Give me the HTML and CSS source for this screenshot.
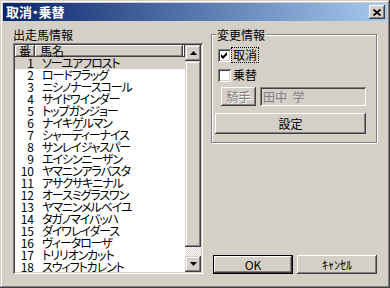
FILE: index.html
```html
<!DOCTYPE html>
<html lang="ja">
<head>
  <meta charset="UTF-8" />
  <title>取消・乗替</title>
  <link rel="stylesheet" href="styles.css">
</head>
<body>
  <div class="window">
    <div class="titlebar">
      <span class="title">取消・乗替</span>
      <span class="close-btn">
        <svg width="8" height="7" viewBox="0 0 8 7"><path d="M0.5 0.5 L7.5 6.5 M7.5 0.5 L0.5 6.5" stroke="#000" stroke-width="1.8" fill="none"/></svg>
      </span>
    </div>
    <div class="client">
      <div class="left">
        <div class="label">出走馬情報</div>
        <div class="listview">
          <div class="list-main">
            <div class="list-header">
              <div class="hcol col-no">番</div>
              <div class="hcol col-name">馬名</div>
              <div class="hcol col-rest"></div>
            </div>
            <div class="list-rows">
              <div class="row selected"><span class="no">1</span><span class="name">ソーユアフロスト</span></div>
              <div class="row"><span class="no">2</span><span class="name">ロードフラッグ</span></div>
              <div class="row"><span class="no">3</span><span class="name">ニシノナースコール</span></div>
              <div class="row"><span class="no">4</span><span class="name">サイドワインダー</span></div>
              <div class="row"><span class="no">5</span><span class="name">トップガンジョー</span></div>
              <div class="row"><span class="no">6</span><span class="name">ナイキゲルマン</span></div>
              <div class="row"><span class="no">7</span><span class="name">シャーディーナイス</span></div>
              <div class="row"><span class="no">8</span><span class="name">サンレイジャスパー</span></div>
              <div class="row"><span class="no">9</span><span class="name">エイシンニーザン</span></div>
              <div class="row"><span class="no">10</span><span class="name">ヤマニンアラバスタ</span></div>
              <div class="row"><span class="no">11</span><span class="name">アサクサキニナル</span></div>
              <div class="row"><span class="no">12</span><span class="name">オースミグラスワン</span></div>
              <div class="row"><span class="no">13</span><span class="name">ヤマニンメルベイユ</span></div>
              <div class="row"><span class="no">14</span><span class="name">タガノマイバッハ</span></div>
              <div class="row"><span class="no">15</span><span class="name">ダイワレイダース</span></div>
              <div class="row"><span class="no">16</span><span class="name">ヴィータローザ</span></div>
              <div class="row"><span class="no">17</span><span class="name">トリリオンカット</span></div>
              <div class="row"><span class="no">18</span><span class="name">スウィフトカレント</span></div>
            </div>
          </div>
          <div class="scrollbar">
            <div class="sb-btn">
              <svg width="7" height="4" viewBox="0 0 7 4"><path d="M3.5 0 L7 4 L0 4 Z" fill="#000"/></svg>
            </div>
            <div class="sb-thumb"></div>
            <div class="sb-track"></div>
            <div class="sb-btn">
              <svg width="7" height="4" viewBox="0 0 7 4"><path d="M0 0 L7 0 L3.5 4 Z" fill="#000"/></svg>
            </div>
          </div>
        </div>
      </div>

      <div class="right">
        <div class="group">
          <div class="group-title">変更情報</div>
          <div class="check-row">
            <span class="checkbox">
              <svg width="7" height="7" viewBox="0 0 7 7"><path d="M0 2 L2 4 L6 0 L6 3 L2 7 L0 5 Z" fill="#000"/></svg>
            </span>
            <span class="check-label focused">取消</span>
          </div>
          <div class="check-row">
            <span class="checkbox"></span>
            <span class="check-label">乗替</span>
          </div>
          <div class="jockey-row">
            <span class="btn disabled jockey-btn">騎手</span>
            <span class="textbox">田中&nbsp;&nbsp;学</span>
          </div>
          <span class="btn set-btn">設定</span>
        </div>
        <div class="buttons">
          <span class="btn default">OK</span>
          <span class="btn">ｷｬﾝｾﾙ</span>
        </div>
      </div>
    </div>
  </div>
</body>
</html>
```

FILE: styles.css
```css
body {
  margin: 0;
  font-family: "Noto Sans CJK JP", sans-serif;
  font-size: 12px;
  font-feature-settings: "palt";
  color: #000;
  background: #d4d0c8;
}
.window {
  width: 390px;
  height: 288px;
  box-sizing: border-box;
  padding: 3px;
  background: #d4d0c8;
  box-shadow: inset -1px -1px #404040, inset 1px 1px #d4d0c8, inset -2px -2px #808080, inset 2px 2px #fff;
  display: flex;
  flex-direction: column;
}
.titlebar {
  height: 18px;
  flex: none;
  display: flex;
  align-items: center;
  justify-content: space-between;
  padding: 0 2px 0 3px;
  background: linear-gradient(to right, #0a246a, #a6caf0);
  color: #fff;
  font-weight: bold;
  font-size: 13px;
  line-height: 18px;
}
.close-btn {
  width: 16px;
  height: 14px;
  box-sizing: border-box;
  background: #d4d0c8;
  display: flex;
  align-items: center;
  justify-content: center;
  box-shadow: inset -1px -1px #404040, inset 1px 1px #fff, inset -2px -2px #808080;
}
.client {
  flex: 1;
  display: flex;
  gap: 8px;
  padding: 7px 9px 11px 10px;
}
.left {
  width: 190px;
  display: flex;
  flex-direction: column;
}
.label {
  line-height: 14px;
  margin-bottom: 1px;
}
.listview {
  height: 231px;
  box-sizing: border-box;
  padding: 2px;
  background: #fff;
  box-shadow: inset 1px 1px #808080, inset -1px -1px #fff, inset 2px 2px #404040, inset -2px -2px #d4d0c8;
  display: flex;
  overflow: hidden;
}
.list-main {
  flex: 1;
  overflow: hidden;
}
.list-header {
  display: flex;
  height: 12px;
  line-height: 12px;
}
.hcol {
  box-sizing: border-box;
  background: #d4d0c8;
  box-shadow: inset -1px -1px #404040, inset 1px 1px #fff, inset -2px -2px #808080;
}
.hcol.col-no {
  width: 20px;
  text-align: center;
}
.hcol.col-name {
  width: 148px;
  padding-left: 5px;
}
.hcol.col-rest {
  flex: 1;
}
.row {
  display: flex;
  height: 12px;
  line-height: 12px;
}
.row.selected {
  background: #d4d0c8;
}
.row .no {
  width: 19px;
  text-align: right;
}
.row .name {
  padding-left: 8px;
  letter-spacing: -1.1px;
  white-space: nowrap;
}
.scrollbar {
  width: 16px;
  display: flex;
  flex-direction: column;
}
.sb-btn {
  height: 16px;
  box-sizing: border-box;
  background: #d4d0c8;
  display: flex;
  align-items: center;
  justify-content: center;
  box-shadow: inset -1px -1px #404040, inset 1px 1px #d4d0c8, inset -2px -2px #808080, inset 2px 2px #fff;
}
.sb-thumb {
  height: 186px;
  background: #d4d0c8;
  box-shadow: inset -1px -1px #404040, inset 1px 1px #d4d0c8, inset -2px -2px #808080, inset 2px 2px #fff;
}
.sb-track {
  flex: 1;
  background: repeating-conic-gradient(#fff 0 25%, #d4d0c8 0 50%) 0 0 / 2px 2px;
}
.right {
  flex: 1;
  display: flex;
  flex-direction: column;
}
.group {
  margin: 6px 1px 0 0;
  padding: 0 10px 8px 3px;
  border: 1px solid #808080;
  box-shadow: inset 1px 1px #fff, 1px 1px #fff;
  display: flex;
  flex-direction: column;
  align-items: flex-start;
}
.group-title {
  margin: -7px 0 0 1px;
  padding: 0 1px;
  line-height: 14px;
  background: #d4d0c8;
}
.check-row {
  display: flex;
  align-items: center;
  height: 16px;
  margin: 5px 0 0 3px;
}
.check-row + .check-row {
  margin-top: 4px;
}
.checkbox {
  width: 13px;
  height: 13px;
  box-sizing: border-box;
  background: #fff;
  display: flex;
  align-items: center;
  justify-content: center;
  box-shadow: inset 1px 1px #808080, inset -1px -1px #fff, inset 2px 2px #404040, inset -2px -2px #d4d0c8;
}
.check-label {
  margin-left: 1px;
  padding: 0 1px;
  line-height: 14px;
}
.check-label.focused {
  outline: 1px dotted #000;
}
.btn {
  box-sizing: border-box;
  display: flex;
  align-items: center;
  justify-content: center;
  background: #d4d0c8;
  box-shadow: inset -1px -1px #404040, inset 1px 1px #fff, inset -2px -2px #808080;
}
.btn.disabled {
  color: #808080;
  text-shadow: 1px 1px #fff;
}
.jockey-row {
  display: flex;
  align-self: stretch;
  gap: 4px;
  height: 19px;
  margin: 4px 0 0 6px;
}
.jockey-btn {
  width: 35px;
}
.textbox {
  flex: 1;
  box-sizing: border-box;
  padding: 0 3px;
  line-height: 19px;
  color: #808080;
  background: #d4d0c8;
  box-shadow: inset 1px 1px #808080, inset -1px -1px #fff, inset 2px 2px #404040, inset -2px -2px #d4d0c8;
}
.set-btn {
  align-self: stretch;
  height: 21px;
  margin-top: 7px;
}
.buttons {
  margin: auto 1px 0 0;
  display: flex;
  justify-content: flex-end;
  gap: 4px;
}
.buttons .btn {
  width: 80px;
  height: 19px;
}
.btn.default {
  border: 1px solid #000;
}
```
